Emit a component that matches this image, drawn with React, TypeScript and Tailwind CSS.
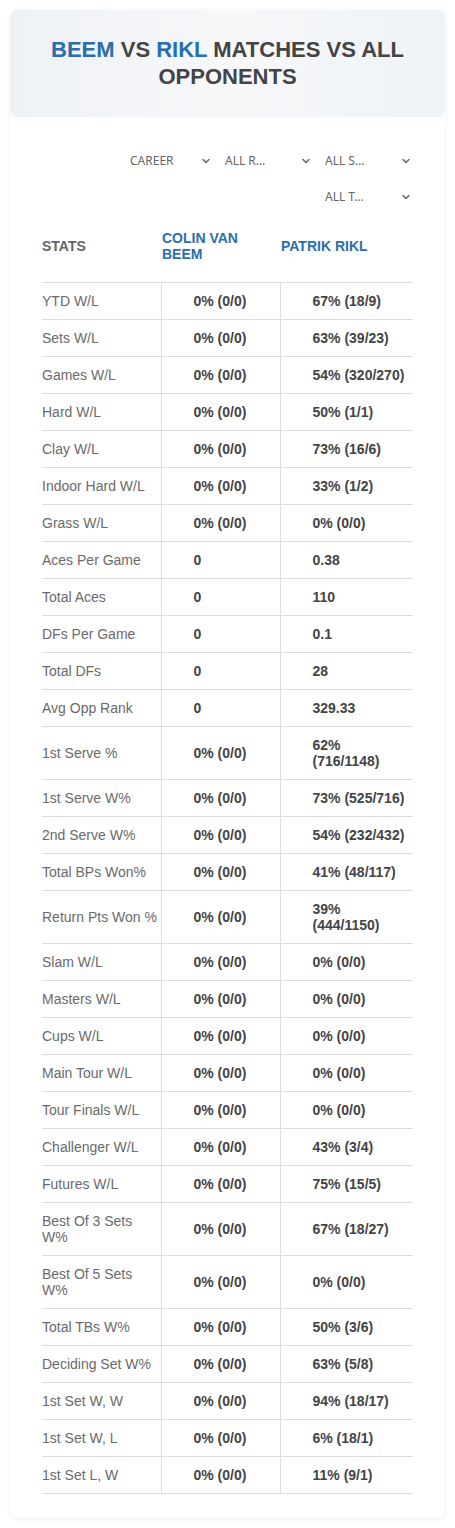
import React from 'react';
import { ChevronDown } from 'lucide-react';

const rows: [string, string, string][] = [
  ['YTD W/L', '0% (0/0)', '67% (18/9)'],
  ['Sets W/L', '0% (0/0)', '63% (39/23)'],
  ['Games W/L', '0% (0/0)', '54% (320/270)'],
  ['Hard W/L', '0% (0/0)', '50% (1/1)'],
  ['Clay W/L', '0% (0/0)', '73% (16/6)'],
  ['Indoor Hard W/L', '0% (0/0)', '33% (1/2)'],
  ['Grass W/L', '0% (0/0)', '0% (0/0)'],
  ['Aces Per Game', '0', '0.38'],
  ['Total Aces', '0', '110'],
  ['DFs Per Game', '0', '0.1'],
  ['Total DFs', '0', '28'],
  ['Avg Opp Rank', '0', '329.33'],
  ['1st Serve %', '0% (0/0)', '62% (716/1148)'],
  ['1st Serve W%', '0% (0/0)', '73% (525/716)'],
  ['2nd Serve W%', '0% (0/0)', '54% (232/432)'],
  ['Total BPs Won%', '0% (0/0)', '41% (48/117)'],
  ['Return Pts Won %', '0% (0/0)', '39% (444/1150)'],
  ['Slam W/L', '0% (0/0)', '0% (0/0)'],
  ['Masters W/L', '0% (0/0)', '0% (0/0)'],
  ['Cups W/L', '0% (0/0)', '0% (0/0)'],
  ['Main Tour W/L', '0% (0/0)', '0% (0/0)'],
  ['Tour Finals W/L', '0% (0/0)', '0% (0/0)'],
  ['Challenger W/L', '0% (0/0)', '43% (3/4)'],
  ['Futures W/L', '0% (0/0)', '75% (15/5)'],
  ['Best Of 3 Sets W%', '0% (0/0)', '67% (18/27)'],
  ['Best Of 5 Sets W%', '0% (0/0)', '0% (0/0)'],
  ['Total TBs W%', '0% (0/0)', '50% (3/6)'],
  ['Deciding Set W%', '0% (0/0)', '63% (5/8)'],
  ['1st Set W, W', '0% (0/0)', '94% (18/17)'],
  ['1st Set W, L', '0% (0/0)', '6% (18/1)'],
  ['1st Set L, W', '0% (0/0)', '11% (9/1)'],
];

const filters = [
  { label: 'CAREER', w: 'w-[93px]' },
  { label: 'ALL R…', w: 'w-[98px]' },
  { label: 'ALL S…', w: 'w-[98px]' },
  { label: 'ALL T…', w: 'w-[98px]' },
];

export default function App() {
  return (
    <div className="min-h-screen bg-white p-[10px] font-[family-name:Liberation_Sans,Arial,sans-serif]">
      <div className="rounded-lg bg-white shadow-[0_1px_4px_rgba(0,0,0,0.08)] pb-6">
        <div className="rounded-lg bg-gradient-to-r from-[#eef1f5] via-[#f7f8fa] to-[#eef2f6] px-6 pt-[26px] pb-[27px] text-center">
          <h1 className="text-[22px] font-bold uppercase leading-[27px] text-[#444]">
            <span className="text-[#2a6eae]">Beem</span> vs <span className="text-[#2a6eae]">Rikl</span> Matches vs All Opponents
          </h1>
        </div>

        <div className="mx-[32px] mt-[25px]">
          <div className="flex flex-wrap justify-end gap-x-[2px] pt-px">
            {filters.map((f) => (
              <div
                key={f.label}
                className={`${f.w} flex h-[36px] items-center justify-between pl-[10px] pr-[1px] font-[family-name:Noto_Sans,sans-serif] text-[12px] text-[#666]`}
              >
                <span>{f.label}</span>
                <ChevronDown size={12} strokeWidth={3} className="text-[#666]" />
              </div>
            ))}
          </div>

          <table className="w-full table-fixed border-collapse text-[14px] leading-4">
            <colgroup>
              <col className="w-[119px]" />
              <col className="w-[119px]" />
              <col />
            </colgroup>
            <thead>
              <tr className="h-[67px] border-b border-[#ddd]">
                <th className="pb-[5px] text-left font-bold text-[#666]">STATS</th>
                <th className="pb-[5px] pl-px text-left font-bold text-[#2a6eae]">COLIN VAN BEEM</th>
                <th className="pb-[5px] pl-px text-left font-bold text-[#2a6eae]">PATRIK RIKL</th>
              </tr>
            </thead>
            <tbody>
              {rows.map(([label, a, b]) => (
                <tr key={label} className="border-b border-[#ddd]">
                  <td className="py-[10px] pr-[2px] text-[#6a6a6a]">{label}</td>
                  <td className="border-l border-[#ddd] py-[10px] pl-[32px] font-bold text-[#444]">{a}</td>
                  <td className="border-l border-[#ddd] py-[10px] pl-[32px] pr-[6px] font-bold text-[#444]">{b}</td>
                </tr>
              ))}
            </tbody>
          </table>
        </div>
      </div>
    </div>
  );
}
